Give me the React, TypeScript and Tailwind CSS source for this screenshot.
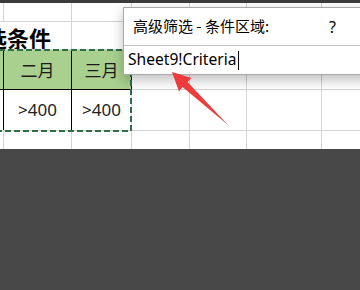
import React from 'react';

const cols = [4, 68, 60, 58, 57, 75, 60];
const font = { fontFamily: '"Noto Sans", "Noto Sans CJK SC", sans-serif' };

function GridRow({ h, children }: { h: string; children?: React.ReactNode }) {
  return <div className={`flex ${h} border-b border-[#d4d4d4]`}>{children}</div>;
}

function Cell({ w, className = '', children }: { w: number; className?: string; children?: React.ReactNode }) {
  return (
    <div
      className={`shrink-0 h-full border-r flex items-center justify-center ${className || 'border-[#d4d4d4]'}`}
      style={{ width: w }}
    >
      {children}
    </div>
  );
}

export default function App() {
  return (
    <div className="relative w-[360px] h-[290px] overflow-hidden bg-[#484848]" style={font}>
      <div className="h-[3px] bg-[#3c3c3c]" />

      {/* --- SHEET --- */}
      <div className="bg-white h-[146px] overflow-hidden">
        <GridRow h="h-[19px]">
          {cols.map((w, i) => <Cell key={i} w={w} />)}
        </GridRow>

        <GridRow h="h-[28px]">
          <div className="shrink-0 w-[72px] h-full border-r border-[#d4d4d4] flex items-center overflow-hidden">
            <span className="ml-[-15px] whitespace-nowrap text-[22px] font-bold text-black leading-none pt-[2px]" style={{ fontFamily: '"Noto Sans CJK SC", sans-serif' }}>
              选条件
            </span>
          </div>
          {cols.slice(2).map((w, i) => <Cell key={i} w={w} />)}
        </GridRow>

        <div className="flex h-[40px]">
          <Cell w={cols[0]} className="border-black bg-[#a9d08e] border-b" />
          <Cell w={cols[1]} className="border-black bg-[#a9d08e] border-b text-[17px] text-[#1a1a1a] pt-[2px]">二月</Cell>
          <Cell w={cols[2]} className="border-black bg-[#a9d08e] border-b text-[17px] text-[#1a1a1a] pt-[2px]">三月</Cell>
          {cols.slice(3).map((w, i) => <Cell key={i} w={w} className="border-[#d4d4d4] border-b" />)}
        </div>

        <GridRow h="h-[41px]">
          <Cell w={cols[0]} className="border-black" />
          <Cell w={cols[1]} className="border-black text-[17px] text-[#222]">&gt;400</Cell>
          <Cell w={cols[2]} className="border-[#d4d4d4] text-[17px] text-[#222]">&gt;400</Cell>
          {cols.slice(3).map((w, i) => <Cell key={i} w={w} />)}
        </GridRow>

        <div className="flex h-[20px]">
          {cols.map((w, i) => <Cell key={i} w={w} />)}
        </div>
      </div>

      {/* marching ants round the criteria range */}
      <svg className="absolute left-0 top-0 pointer-events-none" width="360" height="290">
        <path d="M-10 50 H131 V131 H-10" fill="none" stroke="#2e6f47" strokeWidth="2" strokeDasharray="6 3" />
      </svg>

      {/* --- DIALOG --- */}
      <div className="absolute left-[123px] top-[7px] w-[260px] bg-white border border-[#a8a8a8] shadow-[0_5px_12px_rgba(0,0,0,0.25)]">
        <div className="h-[37px] flex items-center pl-[9px] text-[15px] text-black">
          <span style={{ fontFamily: '"Noto Sans CJK SC", sans-serif' }}>高级筛选 - 条件区域:</span>
          <span className="ml-[60px] text-[16px]">?</span>
        </div>
        <div className="h-[29px] border-t border-[#c4c4c4] flex items-center pl-[4px] text-[15.6px] text-black">
          <span className="leading-none">Sheet9!Criteria</span>
          <span className="ml-[1px] w-px h-[19px] bg-black" />
        </div>
      </div>

      {/* red arrow */}
      <svg className="absolute left-0 top-0 pointer-events-none" width="360" height="290">
        <polygon points="172,72 191.5,78 187.5,82 228,125 182.5,87 179,91.5" fill="#ef3b3b" />
      </svg>
    </div>
  );
}
